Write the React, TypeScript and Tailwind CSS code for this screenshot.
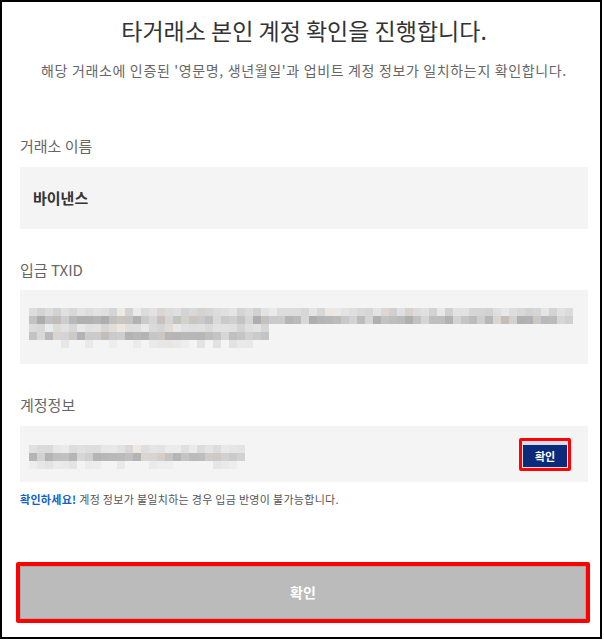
import type { CSSProperties } from "react";

const FONT = {
  fontFamily: '"Noto Sans CJK KR", "Noto Sans", "Liberation Sans", sans-serif',
} as CSSProperties;

// simple seeded random so the mosaic is the same every render
const makeRand = (seed: number) => {
  let s = seed;
  return () => {
    s = (s * 9301 + 49297) % 233280;
    return s / 233280;
  };
};

interface MosaicRow {
  cells: number;
  min: number;
  max: number;
  sparse?: boolean;
}

const Mosaic = ({ rows, seed }: { rows: MosaicRow[]; seed: number }) => {
  const rand = makeRand(seed);
  return (
    <div className="flex flex-col">
      {rows.map((row, i) => (
        <div className="flex h-[8px]" key={i}>
          {Array.from({ length: row.cells }).map((_, j) => {
            const v = Math.round(row.min + rand() * (row.max - row.min));
            const hide = row.sparse && rand() > 0.35;
            const tint = rand() > 0.9 ? 6 : 0;
            return (
              <div
                key={j}
                className="w-[8px] h-[8px]"
                style={{
                  backgroundColor: hide
                    ? "transparent"
                    : `rgb(${v + tint}, ${v}, ${v - tint})`,
                }}
              />
            );
          })}
        </div>
      ))}
    </div>
  );
};

export default function App() {
  return (
    <div className="w-[604px] h-[640px] bg-white" style={FONT}>
      <div className="w-[602px] h-[639px] border-2 border-black bg-white flex flex-col">
        <div className="ml-[18px] w-[568px] flex flex-col">
          <h1 className="mt-[11px] h-[34px] leading-[34px] text-center text-[23px] text-[#333333]">
            타거래소 본인 계정 확인을 진행합니다.
          </h1>
          <p className="mt-[13px] h-[20px] leading-[20px] text-center text-[14px] tracking-[0.65px] text-[#666666]">
            해당 거래소에 인증된 '영문명, 생년월일'과 업비트 계정 정보가 일치하는지 확인합니다.
          </p>

          <div className="mt-[56px] h-[20px] leading-[20px] text-[15px] text-[#666666]">
            거래소 이름
          </div>
          <div className="mt-[11px] h-[62px] bg-[#f4f4f4] flex items-center px-[13px] text-[15px] font-bold text-[#333333]">
            바이낸스
          </div>

          <div className="mt-[31px] h-[20px] leading-[20px] text-[15px] text-[#666666]">
            입금 TXID
          </div>
          <div className="mt-[10px] h-[74px] bg-[#f4f4f4] pl-[9px] pt-[18px]">
            <Mosaic
              seed={7}
              rows={[
                { cells: 68, min: 208, max: 235 },
                { cells: 68, min: 172, max: 218 },
                { cells: 30, min: 212, max: 236 },
                { cells: 30, min: 178, max: 218 },
                { cells: 30, min: 226, max: 238, sparse: true },
              ]}
            />
          </div>

          <div className="mt-[31px] h-[20px] leading-[20px] text-[15px] text-[#666666]">
            계정정보
          </div>
          <div className="mt-[11px] h-[56px] bg-[#f4f4f4] flex items-center justify-between pl-[9px] pr-[17px]">
            <div className="pt-[6px]">
              <Mosaic
                seed={31}
                rows={[
                  { cells: 27, min: 215, max: 236 },
                  { cells: 27, min: 178, max: 218 },
                  { cells: 27, min: 226, max: 238, sparse: true },
                ]}
              />
            </div>
            <div className="border-[3px] border-[#ff0000] rounded-[2px] p-[1px] bg-[#d8dce6]">
              <button
                type="button"
                className="w-[44px] h-[22px] bg-[#0b2a7a] text-white text-[11px] font-bold leading-[22px]"
              >
                확인
              </button>
            </div>
          </div>

          <p className="mt-[9px] h-[16px] leading-[16px] text-[11px] tracking-[0.3px] text-[#555555]">
            <span className="font-bold text-[#1561c4]">확인하세요!</span> 계정 정보가 불일치하는 경우 입금 반영이 불가능합니다.
          </p>

          <div className="mt-[55px] -ml-[4px] -mr-[2px] border-4 border-[#ff0000] rounded-[2px]">
            <button
              type="button"
              className="w-full h-[53px] bg-[#bbbbbb] border border-[#a8a8a8] text-white text-[14px] font-bold"
            >
              확인
            </button>
          </div>
        </div>
      </div>
    </div>
  );
}
